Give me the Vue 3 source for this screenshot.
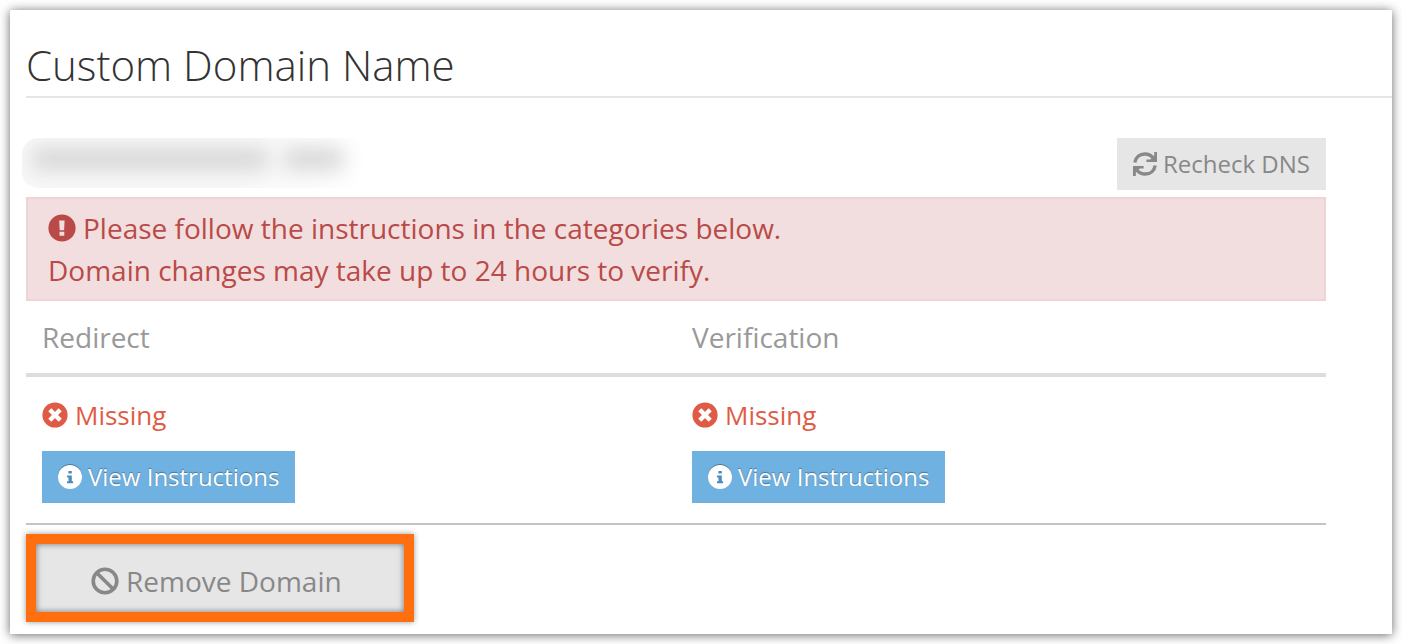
<script setup>
const checks = [
  { id: 'redirect', title: 'Redirect', status: 'Missing' },
  { id: 'verification', title: 'Verification', status: 'Missing' },
]
</script>

<template>
  <main class="card">
    <h1 class="title">Custom Domain Name</h1>

    <div class="content">
      <div class="toolbar">
        <div class="domain" aria-label="Hidden domain name">
          <span class="smudge wide"></span>
          <span class="smudge tail"></span>
        </div>
        <button type="button" class="btn btn-grey">
          <svg class="icon24" viewBox="0 0 24 24" aria-hidden="true">
            <g fill="none" stroke="currentColor" stroke-width="3.4">
              <path d="M1.8 10.6C2.6 5.4 6.7 2 11.8 2c3.3 0 6.2 1.3 8.2 3.8" />
              <path d="M22.2 13.4C21.4 18.6 17.3 22 12.2 22c-3.3 0-6.2-1.3-8.2-3.8" />
            </g>
            <path fill="currentColor" d="M24 0v10H13.4V7.6h3.8l4-4V0zM0 24V14h10.6v2.400H6.800l-4 4V24z" />
          </svg>
          <span>Recheck DNS</span>
        </button>
      </div>

      <div class="alert" role="alert">
        <p class="alert-line">
          <svg class="icon28" viewBox="0 0 28 28" aria-hidden="true">
            <circle cx="14" cy="14" r="13.6" fill="currentColor" />
            <path fill="#f2dede" d="M11.2 6.4h5.4l-.5 9.8h-4.400zM11.5 17.8h4.800v3.900h-4.800z" />
          </svg>
          <span>Please follow the instructions in the categories below.</span>
        </p>
        <p class="alert-line">Domain changes may take up to 24 hours to verify.</p>
      </div>

      <table class="checks">
        <thead>
          <tr>
            <th v-for="c in checks" :key="c.id" scope="col">{{ c.title }}</th>
          </tr>
        </thead>
        <tbody>
          <tr>
            <td v-for="c in checks" :key="c.id">
              <div class="status">
                <svg class="icon26" viewBox="0 0 26 26" aria-hidden="true">
                  <circle cx="13" cy="13" r="12.6" fill="currentColor" />
                  <path d="M7.8 7.8l10.4 10.4M18.2 7.8L7.8 18.2" stroke="#fff" stroke-width="4.4" fill="none" />
                </svg>
                <span>{{ c.status }}</span>
              </div>
              <button type="button" class="btn btn-blue">
                <svg class="icon24" viewBox="0 0 24 24" aria-hidden="true">
                  <circle cx="12" cy="12" r="12" fill="#fff" />
                  <path fill="#4a8dbd" d="M10.400 6h3.400v2.600h-3.400zM9 10.400h4.800v5.800h1.300v2H9v-2h1.500v-3.800H9z" />
                </svg>
                <span>View Instructions</span>
              </button>
            </td>
          </tr>
        </tbody>
      </table>

      <button type="button" class="remove">
        <svg class="icon28" viewBox="0 0 28 28" aria-hidden="true">
          <g fill="none" stroke="currentColor" stroke-width="3.6">
            <circle cx="14" cy="14" r="11.8" />
            <path d="M5.7 5.7l16.6 16.6" />
          </g>
        </svg>
        <span>Remove Domain</span>
      </button>
    </div>
  </main>
</template>

<style>
body {
  margin: 0;
  background: #fff;
}
#app {
  display: flow-root;
}
</style>

<style scoped>
.card {
  margin: 10px;
  padding: 25px 0 12px 16px;
  background: #fff;
  box-shadow: 0 1px 10px rgba(0, 0, 0, 0.6);
  font-family: "Open Sans", "Noto Sans", sans-serif;
}
.title {
  margin: 0;
  padding-bottom: 1px;
  border-bottom: 2px solid #e5e5e5;
  font-size: 42px;
  line-height: 60px;
  font-weight: 300;
  color: #333;
}
.content {
  padding: 40px 66px 0 0;
}
.toolbar {
  display: flex;
  justify-content: space-between;
  align-items: flex-start;
  margin-bottom: 7px;
}
.domain {
  display: flex;
  align-items: flex-start;
  gap: 16px;
  box-sizing: border-box;
  width: 345px;
  height: 50px;
  margin-left: -4px;
  padding: 10px 24px 0 10px;
  border-radius: 16px;
  overflow: hidden;
  background: linear-gradient(90deg, #f9f8f8 60%, #fff);
}
.smudge {
  height: 22px;
  background: #d6d6d6;
  filter: blur(10px);
}
.wide {
  flex: 4;
}
.tail {
  flex: 1;
}
.btn {
  display: inline-flex;
  align-items: center;
  gap: 6px;
  height: 52px;
  padding: 0 16px;
  border: 0;
  font: inherit;
  font-size: 24px;
  line-height: 32px;
  cursor: pointer;
}
.btn-grey {
  background: #e6e6e6;
  color: #888;
}
.btn-blue {
  background: #6fb1e0;
  color: #fff;
  text-shadow: 0 -1px 1px rgba(0, 0, 0, 0.35);
}
.btn-blue svg {
  filter: drop-shadow(0 -1px 0 rgba(0, 0, 0, 0.3));
}
svg {
  flex: none;
}
.icon24 {
  width: 24px;
  height: 24px;
}
.icon26 {
  width: 26px;
  height: 26px;
}
.icon28 {
  width: 28px;
  height: 28px;
}
.alert {
  padding: 8px 20px;
  border: 2px solid #eed3d7;
  background: #f2dede;
  color: #b94a48;
  font-size: 28px;
  line-height: 42px;
}
.alert-line {
  display: flex;
  align-items: center;
  gap: 7px;
  margin: 0;
}
.checks {
  width: 100%;
  table-layout: fixed;
  border-spacing: 0;
}
.checks th {
  padding: 15px 16px;
  border-bottom: 4px solid #ddd;
  text-align: left;
  font-size: 28px;
  line-height: 42px;
  font-weight: 400;
  color: #999;
}
.checks td {
  padding: 18px 16px 20px;
  border-bottom: 2px solid #c4c4c4;
}
.status {
  display: flex;
  align-items: center;
  gap: 7px;
  margin-bottom: 16px;
  font-size: 26px;
  line-height: 40px;
  color: #df5b45;
}
.checks .btn {
  display: flex;
}
.remove {
  display: flex;
  align-items: center;
  gap: 7px;
  height: 88px;
  margin-top: 9px;
  padding: 6px 62px 0 55px;
  border: 10px solid #ff6f0f;
  background: #e6e6e6;
  box-shadow: 0 0 6px rgba(0, 0, 0, 0.4), inset 0 0 6px rgba(0, 0, 0, 0.5);
  font: inherit;
  font-size: 28px;
  color: #888;
  cursor: pointer;
}
</style>
